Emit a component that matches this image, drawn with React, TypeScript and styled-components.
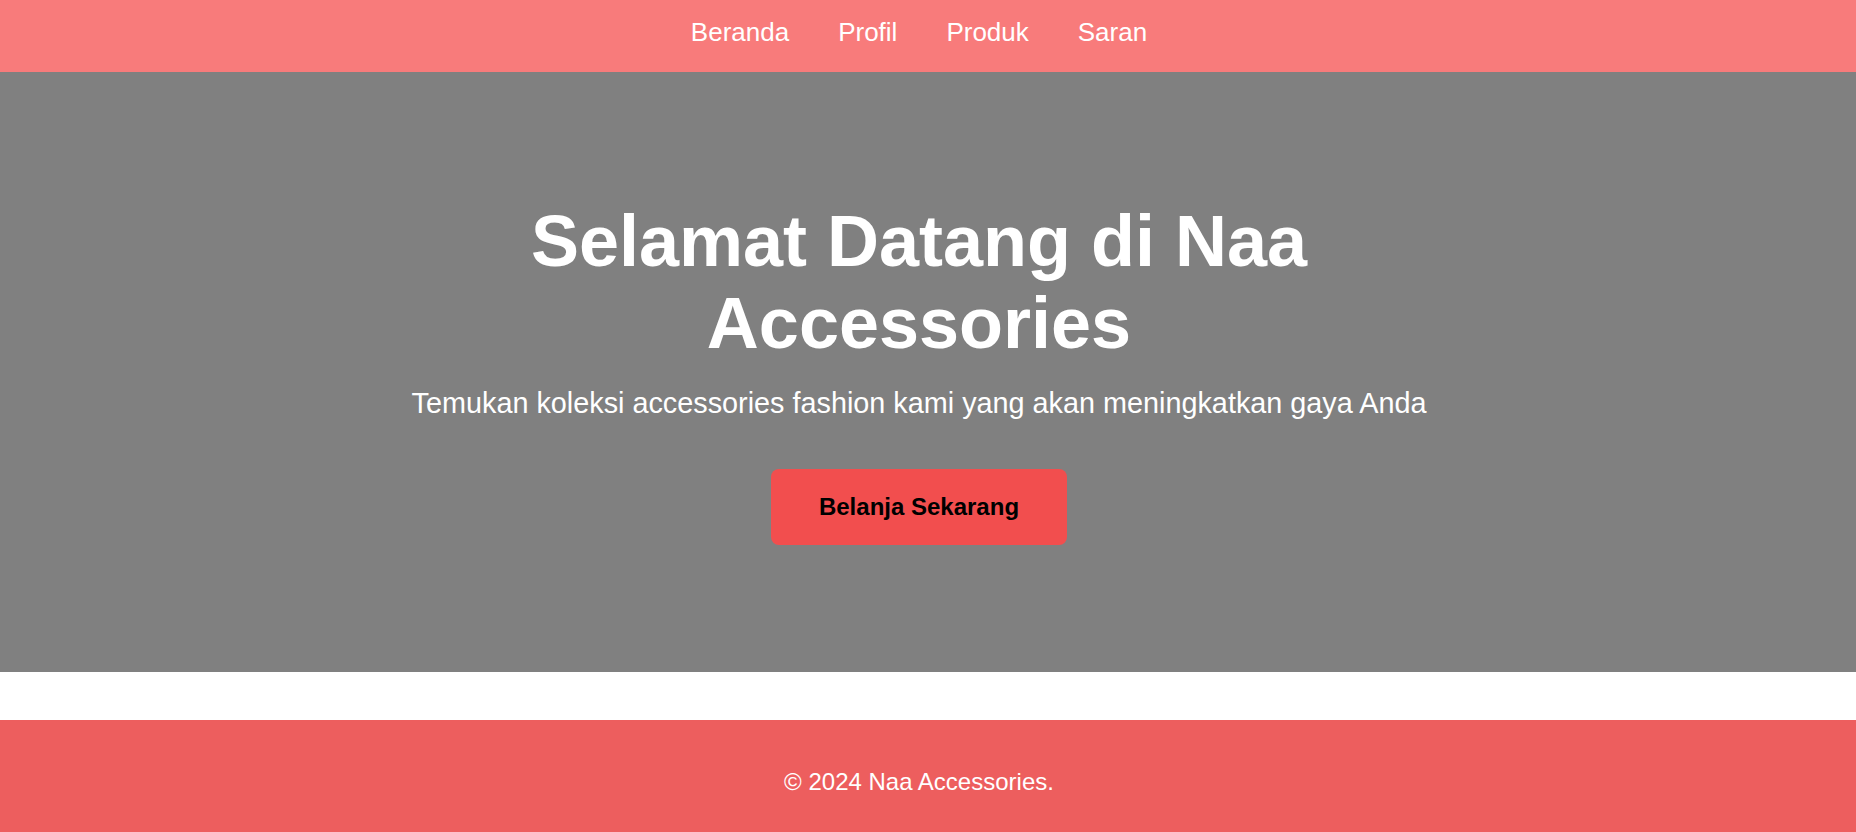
import React from "react";
import styled, { createGlobalStyle } from "styled-components";

const GlobalStyle = createGlobalStyle`
  * { box-sizing: border-box; }
  html, body { margin: 0; padding: 0; }
  body {
    font-family: "Liberation Sans", Arial, Helvetica, sans-serif;
    background: #ffffff;
    color: #000;
  }
`;

/* The reference lays out its content in a 1838px wide area (a scrollbar's worth narrower). */
const OFFSET = "18px";

const NavBar = styled.nav`
  height: 72px;
  background: #f87b7b;
  padding-top: 17px;
  padding-right: ${OFFSET};
`;

const NavList = styled.ul`
  list-style: none;
  margin: 0;
  padding: 0;
  display: flex;
  justify-content: center;
  gap: 49px;
`;

const NavLink = styled.a`
  color: #ffffff;
  text-decoration: none;
  font-size: 26px;
  line-height: normal;
`;

const Hero = styled.section`
  height: 600px;
  background: #808080;
  display: flex;
  flex-direction: column;
  align-items: center;
  justify-content: center;
  text-align: center;
  color: #ffffff;
  padding-right: ${OFFSET};
`;

const Title = styled.h1`
  margin: 0;
  max-width: 900px;
  font-size: 72px;
  font-weight: 700;
  line-height: normal;
`;

const Subtitle = styled.p`
  margin: 23px 0 49px;
  font-size: 28.8px;
  line-height: normal;
`;

const CtaButton = styled.a`
  display: inline-block;
  background: #f24e4e;
  color: #000000;
  font-size: 24px;
  font-weight: 700;
  line-height: normal;
  padding: 24px 48px;
  border-radius: 8px;
  text-decoration: none;
`;

const Spacer = styled.div`
  height: 48px;
`;

const Footer = styled.footer`
  background: #ed5e5e;
  color: #ffffff;
  text-align: center;
  padding: 48px ${OFFSET} 48px 0;
`;

const FooterText = styled.p`
  margin: 0;
  font-size: 24px;
  line-height: normal;
`;

const links = ["Beranda", "Profil", "Produk", "Saran"];

export default function App() {
  return (
    <>
      <GlobalStyle />
      <NavBar>
        <NavList>
          {links.map((l) => (
            <li key={l}>
              <NavLink href="#">{l}</NavLink>
            </li>
          ))}
        </NavList>
      </NavBar>
      <Hero>
        <Title>Selamat Datang di Naa Accessories</Title>
        <Subtitle>
          Temukan koleksi accessories fashion kami yang akan meningkatkan gaya Anda
        </Subtitle>
        <CtaButton href="#">Belanja Sekarang</CtaButton>
      </Hero>
      <Spacer />
      <Footer>
        <FooterText>© 2024 Naa Accessories.</FooterText>
      </Footer>
    </>
  );
}
